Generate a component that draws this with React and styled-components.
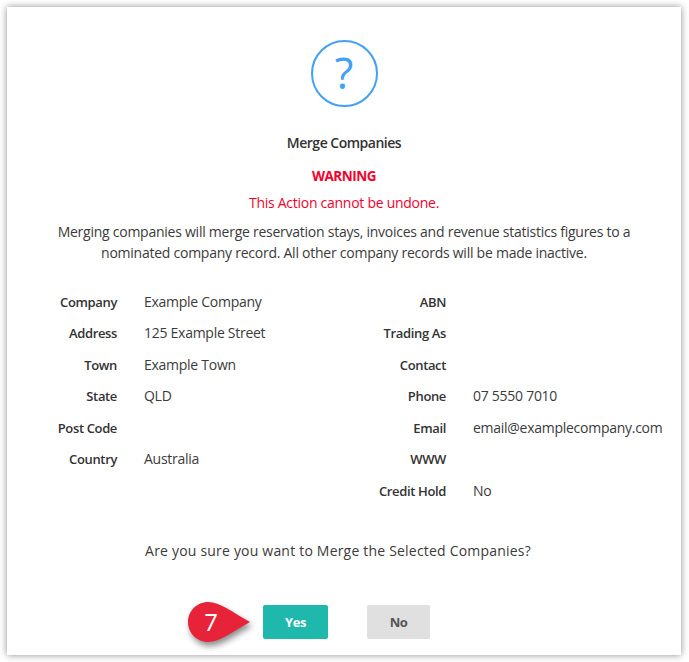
import React from "react";
import styled, { createGlobalStyle } from "styled-components";

const GlobalStyle = createGlobalStyle`
  html, body {
    margin: 0;
    padding: 0;
    background: #fff;
  }
  body {
    font-family: "Open Sans", "Liberation Sans", sans-serif;
    color: #3b3b3b;
  }
`;

const rows = [
  ["Company", "Example Company", "ABN", ""],
  ["Address", "125 Example Street", "Trading As", ""],
  ["Town", "Example Town", "Contact", ""],
  ["State", "QLD", "Phone", "07 5550 7010"],
  ["Post Code", "", "Email", "email@examplecompany.com"],
  ["Country", "Australia", "WWW", ""],
  ["", "", "Credit Hold", "No"],
];

function App() {
  return (
    <Page>
      <GlobalStyle />
      <Card>
        <QuestionIcon>?</QuestionIcon>
        <Title>Merge Companies</Title>
        <Warning>WARNING</Warning>
        <Undone>This Action cannot be undone.</Undone>
        <Intro>
          Merging companies will merge reservation stays, invoices and revenue statistics figures to a nominated company
          record. All other company records will be made inactive.
        </Intro>
        <Details>
          {rows.map((row) => (
            <React.Fragment key={row[0] + row[2]}>
              <Label>{row[0]}</Label>
              <Value>{row[1]}</Value>
              <Label>{row[2]}</Label>
              <Value>{row[3]}</Value>
            </React.Fragment>
          ))}
        </Details>
        <Question>Are you sure you want to Merge the Selected Companies?</Question>
        <Buttons>
          <Marker>
            <svg width="78" height="58" viewBox="0 0 78 58">
              <path
                d="M24 4C36 4 48 14 66 24C48 34 36 44 24 44C12.95 44 4 35.05 4 24C4 12.95 12.95 4 24 4Z"
                fill="#e62339"
              />
            </svg>
            <MarkerNumber>7</MarkerNumber>
          </Marker>
          <Button $primary>Yes</Button>
          <Button>No</Button>
        </Buttons>
      </Card>
    </Page>
  );
}
export default App;

const Page = styled.div`
  width: 689px;
  height: 662px;
  padding: 7px 8px 7px 7px;
  box-sizing: border-box;
  overflow: hidden;
`;

const Card = styled.div`
  position: relative;
  height: 648px;
  box-sizing: border-box;
  padding-top: 33px;
  background: #fff;
  box-shadow: 0 0 7px rgba(0, 0, 0, 0.45);
  text-align: center;
  font-size: 14px;
  letter-spacing: -0.27px;
`;

const QuestionIcon = styled.div`
  width: 67px;
  height: 67px;
  margin: 0 auto;
  box-sizing: border-box;
  border: 2px solid #42a0f5;
  border-radius: 50%;
  color: #42a0f5;
  font-size: 43px;
  letter-spacing: 0;
  line-height: 61px;
`;

const Title = styled.div`
  margin-top: 26px;
  font-weight: 600;
  line-height: 20px;
  letter-spacing: -0.5px;
  color: #333;
`;

const Warning = styled.div`
  margin-top: 13px;
  font-size: 13.5px;
  font-weight: 700;
  line-height: 20px;
  letter-spacing: -0.5px;
  color: #f4002b;
`;

const Undone = styled.div`
  margin-top: 7px;
  line-height: 20px;
  color: #f4002b;
`;

const Intro = styled.p`
  width: 600px;
  margin: 8px auto 0;
  line-height: 21px;
  letter-spacing: -0.25px;
`;

const Details = styled.div`
  display: grid;
  grid-template-columns: 87px 175px 100px 190px;
  grid-auto-rows: 31.5px;
  column-gap: 27px;
  align-items: center;
  margin-top: 23px;
  padding-left: 23px;
  text-align: left;
  white-space: nowrap;
`;

const Label = styled.div`
  font-size: 13px;
  font-weight: 600;
  letter-spacing: -0.36px;
  text-align: right;
  color: #333;
`;

const Value = styled.div`
  line-height: 20px;
  min-height: 20px;
`;

const Question = styled.div`
  margin-top: 34px;
  padding-right: 12px;
  line-height: 20px;
  letter-spacing: 0.2px;
`;

const Buttons = styled.div`
  position: relative;
  display: flex;
  justify-content: center;
  gap: 39px;
  margin-top: 44px;
  padding-left: 5px;
`;

const Button = styled.div`
  width: ${(p) => (p.$primary ? "65px" : "63px")};
  height: 34px;
  border-radius: 2px;
  background: ${(p) => (p.$primary ? "#1eb8ad" : "#e0e0e0")};
  color: ${(p) => (p.$primary ? "#fff" : "#555")};
  font-size: 13px;
  font-weight: 700;
  line-height: 34px;
  letter-spacing: -0.5px;
  text-align: center;
`;

const Marker = styled.div`
  position: absolute;
  left: 177px;
  top: -7px;
  width: 78px;
  height: 58px;

  svg {
    display: block;
    filter: drop-shadow(2px 4px 3px rgba(0, 0, 0, 0.45));
  }
`;

const MarkerNumber = styled.span`
  position: absolute;
  left: 7px;
  top: 4px;
  width: 40px;
  color: #fff;
  font-family: "Lato", sans-serif;
  font-size: 23px;
  letter-spacing: 0;
  line-height: 40px;
  text-align: center;
`;
